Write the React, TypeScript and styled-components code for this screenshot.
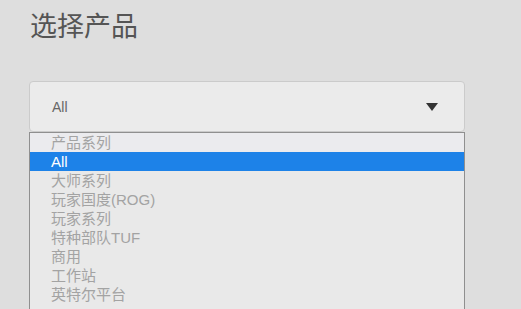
import React from "react";
import styled, {createGlobalStyle} from "styled-components";

const GlobalStyle = createGlobalStyle`
  html, body {
    margin: 0;
    padding: 0;
    background: #dedede;
    overflow: hidden;
  }
  body {
    font-family: "Liberation Sans", "Noto Sans CJK SC", sans-serif;
  }
`;

const Page = styled.div`
  width: 521px;
  height: 309px;
  padding: 0 0 0 29px;
  box-sizing: border-box;
  overflow: hidden;
`;

const Title = styled.h2`
  margin: 0;
  padding-top: 5px;
  height: 81px;
  box-sizing: border-box;
  font-family: "Noto Sans CJK SC", sans-serif;
  font-size: 27px;
  line-height: 40px;
  font-weight: 400;
  color: #555;
  padding-left: 1px;
`;

const SelectWrap = styled.div`
  width: 436px;
`;

const SelectBox = styled.div`
  height: 51px;
  box-sizing: border-box;
  display: flex;
  align-items: center;
  justify-content: space-between;
  padding: 0 26px 0 22px;
  background: #ebebeb;
  border: 1px solid #cbcbcb;
  border-radius: 4px;
  font-size: 14px;
  color: #666;
`;

const Arrow = styled.svg`
  width: 12px;
  height: 8px;
  display: block;
`;

const List = styled.ul`
  margin: 0;
  padding: 0;
  height: 190px;
  list-style: none;
  background: #e9e9e9;
  border: 1px solid #8f8f8f;
  border-bottom: none;
`;

const Item = styled.li<{ $selected?: boolean; $header?: boolean }>`
  height: 19px;
  line-height: 19px;
  padding-left: 21px;
  font-size: 15px;
  color: ${p => (p.$selected ? "#fff" : "#a3a3a3")};
  background: ${p => (p.$selected ? "#1d82e8" : p.$header ? "#ebebee" : "transparent")};
  white-space: nowrap;
`;

const options = [
    "大师系列",
    "玩家国度(ROG)",
    "玩家系列",
    "特种部队TUF",
    "商用",
    "工作站",
    "英特尔平台",
];

export default function App() {
    return (
        <Page>
            <GlobalStyle/>
            <Title>选择产品</Title>
            <SelectWrap>
                <SelectBox>
                    <span>All</span>
                    <Arrow viewBox="0 0 12 8">
                        <path d="M0 0 L12 0 L6 8 Z" fill="#333"/>
                    </Arrow>
                </SelectBox>
                <List>
                    <Item $header>产品系列</Item>
                    <Item $selected>All</Item>
                    {options.map(o => (
                        <Item key={o}>{o}</Item>
                    ))}
                </List>
            </SelectWrap>
        </Page>
    );
}
